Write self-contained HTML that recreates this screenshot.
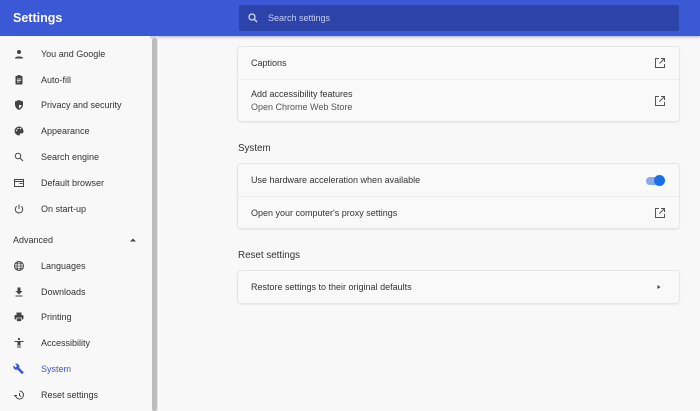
<!DOCTYPE html>
<html><head><style>
*{margin:0;padding:0;box-sizing:border-box}
body{width:700px;height:411px;overflow:hidden;background:#f8f8f8;font-family:"Liberation Sans",sans-serif;position:relative;color:#333}
.hdr{position:absolute;left:0;top:0;width:700px;height:36px;background:#3b58d5;box-shadow:0 1px 3px rgba(0,0,0,.3)}
.hdr .t{position:absolute;left:13px;top:11px;color:#fff;font-size:12.5px;font-weight:bold}
.search{position:absolute;left:239px;top:5px;width:440px;height:26px;background:#2c43aa;border-radius:2px}
.search span{position:absolute;left:29px;top:8px;color:#c8d0f0;font-size:9px}
.side{position:absolute;left:0;top:36px;width:150px;height:375px;background:#f8f8f8}
.sb{position:absolute;left:152px;top:38px;width:5px;height:373px;background:#bdbdbd;border-radius:2px}
.sep{position:absolute;left:157px;top:36px;width:1px;height:375px;background:#e8e8e8}
.it{position:absolute;left:0;font-size:9px;color:#333;height:12px;line-height:12px}
.it span{position:absolute;left:41px;white-space:nowrap}
.it svg{position:absolute;left:13px;top:0}
.card{position:absolute;left:238px;width:441px;background:#f9f9f9;border-radius:3px;box-shadow:0 0 0 1px #e6e6e6,0 1px 2px rgba(0,0,0,.15)}
.row{position:relative;height:32px;font-size:9px;color:#333}
.row+.row{border-top:1px solid #ececec}
.row .l{position:absolute;left:13px;top:11px}
.ttl{position:absolute;left:238px;font-size:9.8px;color:#333}
.ext{position:absolute;left:416px;top:10px}
</style></head><body>
<div class="hdr"><div class="t">Settings</div>
<div class="search"><svg width="12" height="12" viewBox="0 0 24 24" style="position:absolute;left:8px;top:7px"><circle cx="10" cy="10" r="6" fill="none" stroke="#d0d8f5" stroke-width="2.6"/><path d="M14.5 14.5L20 20" stroke="#d0d8f5" stroke-width="2.8"/></svg><span>Search settings</span></div></div>
<div class="side"></div><div class="sep"></div><div class="sb"></div>

<div class="it" style="top:48px"><svg width="12" height="12" viewBox="0 0 24 24"><circle cx="12" cy="8" r="4" fill="#444"/><path d="M4 20c0-4 16-4 16 0v1H4z" fill="#444"/></svg><span>You and Google</span></div>
<div class="it" style="top:74px"><svg width="12" height="12" viewBox="0 0 24 24"><rect x="5" y="4" width="14" height="17" rx="1" fill="#444"/><rect x="9" y="2" width="6" height="4" fill="#444"/><path d="M8 10h8M8 13h8M8 16h5" stroke="#fff" stroke-width="1.5"/></svg><span>Auto-fill</span></div>
<div class="it" style="top:99px"><svg width="12" height="12" viewBox="0 0 24 24"><path d="M12 2l8 3v6c0 5-3.5 9-8 11-4.5-2-8-6-8-11V5z" fill="#444"/><path d="M12 5v7h5c-.5 3-2.5 5.5-5 7z" fill="#fff"/></svg><span>Privacy and security</span></div>
<div class="it" style="top:125px"><svg width="12" height="12" viewBox="0 0 24 24"><path d="M12 3a9 9 0 000 18c1.5 0 2-1 1.5-2s0-2 1.5-2h2a4 4 0 004-4c0-5.5-4-10-9-10z" fill="#444"/><circle cx="7" cy="11" r="1.5" fill="#fff"/><circle cx="10" cy="7" r="1.5" fill="#fff"/><circle cx="15" cy="7" r="1.5" fill="#fff"/></svg><span>Appearance</span></div>
<div class="it" style="top:151px"><svg width="12" height="12" viewBox="0 0 24 24"><circle cx="10" cy="10" r="5.5" fill="none" stroke="#444" stroke-width="2"/><path d="M14 14l6 6" stroke="#444" stroke-width="2.2"/></svg><span>Search engine</span></div>
<div class="it" style="top:177px"><svg width="12" height="12" viewBox="0 0 24 24"><rect x="3" y="5" width="18" height="14" fill="none" stroke="#444" stroke-width="2"/><path d="M3 9h18M13 13h6" stroke="#444" stroke-width="2"/></svg><span>Default browser</span></div>
<div class="it" style="top:203px"><svg width="12" height="12" viewBox="0 0 24 24"><path d="M12 3v9" stroke="#444" stroke-width="2"/><path d="M7.5 6.5a7.5 7.5 0 109 0" fill="none" stroke="#444" stroke-width="2"/></svg><span>On start-up</span></div>
<div class="it" style="top:234px"><span style="left:13px">Advanced</span><svg width="8" height="8" viewBox="0 0 8 8" style="left:129px;top:2px"><path d="M1 5.5L4 2.5L7 5.5z" fill="#444"/></svg></div>
<div class="it" style="top:260px"><svg width="12" height="12" viewBox="0 0 24 24"><circle cx="12" cy="12" r="9" fill="none" stroke="#444" stroke-width="2"/><ellipse cx="12" cy="12" rx="4" ry="9" fill="none" stroke="#444" stroke-width="1.6"/><path d="M3 12h18M4.5 7.5h15M4.5 16.5h15" stroke="#444" stroke-width="1.5"/></svg><span>Languages</span></div>
<div class="it" style="top:286px"><svg width="12" height="12" viewBox="0 0 24 24"><path d="M9 3h6v7h4l-7 7-7-7h4z" fill="#444"/><rect x="5" y="19" width="14" height="2" fill="#444"/></svg><span>Downloads</span></div>
<div class="it" style="top:311px"><svg width="12" height="12" viewBox="0 0 24 24"><rect x="7" y="3" width="10" height="5" fill="#444"/><rect x="3" y="8" width="18" height="9" rx="2" fill="#444"/><rect x="7" y="14" width="10" height="7" fill="#444" stroke="#fff" stroke-width="1.2"/></svg><span>Printing</span></div>
<div class="it" style="top:337px"><svg width="12" height="12" viewBox="0 0 24 24"><circle cx="12" cy="4" r="2.2" fill="#444"/><path d="M3 8h18v2h-6v12h-2v-6h-2v6H9V10H3z" fill="#444"/></svg><span>Accessibility</span></div>
<div class="it" style="top:363px;color:#3b5bd6"><svg width="12" height="12" viewBox="0 0 24 24"><path d="M21 18l-8.5-8.5c.8-2.2.3-4.7-1.5-6.5-1.9-1.9-4.700-2.300-7-1.300l4 4-3 3-4-4C0 7 .5 9.9 2.4 11.8c1.800 1.800 4.300 2.300 6.500 1.500L17.400 21.800c.4.4 1 .4 1.400 0l2.200-2.200c.5-.4.5-1.100 0-1.600z" fill="#3b5bd6"/></svg><span>System</span></div>
<div class="it" style="top:389px"><svg width="12" height="12" viewBox="0 0 24 24"><path d="M5 12a8 8 0 108-8" fill="none" stroke="#444" stroke-width="2"/><path d="M1 12h8l-4 4z" fill="#444"/><path d="M13 8v5l3.5 2" fill="none" stroke="#444" stroke-width="2"/></svg><span>Reset settings</span></div>

<div class="card" style="top:47px">
<div class="row"><span class="l">Captions</span><svg class="ext" width="12" height="12" viewBox="0 0 24 24"><path d="M10 3H3v18h18v-7" fill="none" stroke="#555" stroke-width="2"/><path d="M14 3h7v7M21 3L11 13" fill="none" stroke="#555" stroke-width="2"/></svg></div>
<div class="row" style="height:42px"><span class="l" style="top:9px">Add accessibility features</span><span class="l" style="top:22px;color:#555">Open Chrome Web Store</span><svg class="ext" style="top:15px" width="12" height="12" viewBox="0 0 24 24"><path d="M10 3H3v18h18v-7" fill="none" stroke="#555" stroke-width="2"/><path d="M14 3h7v7M21 3L11 13" fill="none" stroke="#555" stroke-width="2"/></svg></div>
</div>
<div class="ttl" style="top:143px">System</div>
<div class="card" style="top:164px">
<div class="row"><span class="l">Use hardware acceleration when available</span>
<div style="position:absolute;left:408px;top:13px;width:18px;height:8px;border-radius:4px;background:#8aa8ee"></div>
<div style="position:absolute;left:416px;top:11px;width:11px;height:11px;border-radius:50%;background:#1a6ee8"></div></div>
<div class="row"><span class="l">Open your computer's proxy settings</span><svg class="ext" width="12" height="12" viewBox="0 0 24 24"><path d="M10 3H3v18h18v-7" fill="none" stroke="#555" stroke-width="2"/><path d="M14 3h7v7M21 3L11 13" fill="none" stroke="#555" stroke-width="2"/></svg></div>
</div>
<div class="ttl" style="top:250px">Reset settings</div>
<div class="card" style="top:271px">
<div class="row"><span class="l">Restore settings to their original defaults</span><svg style="position:absolute;left:418px;top:13px" width="6" height="6" viewBox="0 0 6 6"><path d="M1.5 1L4.5 3L1.5 5z" fill="#444"/></svg></div>
</div>
</body></html>
